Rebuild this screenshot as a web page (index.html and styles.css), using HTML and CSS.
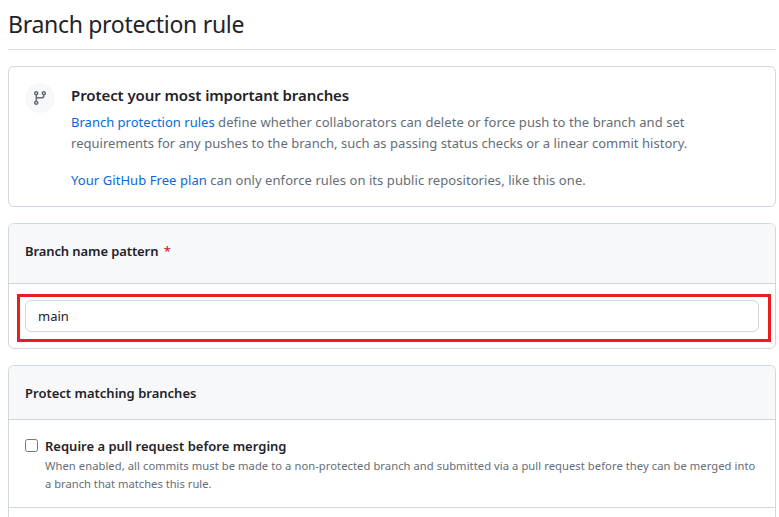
FILE: index.html
```html
<!DOCTYPE html>
<html lang="en">
<head>
<meta charset="utf-8">
<title>Branch protection rule</title>
<link rel="stylesheet" href="styles.css">
</head>
<body>
<main class="settings">
  <h1 class="page-title">Branch protection rule</h1>
  <section class="box intro">
    <div class="icon-circle">
      <svg width="16" height="16" viewBox="0 0 16 16" fill="currentColor" aria-hidden="true"><path d="M9.5 3.25a2.25 2.25 0 1 1 3 2.122V6A2.5 2.5 0 0 1 10 8.5H6a1 1 0 0 0-1 1v1.128a2.251 2.251 0 1 1-1.5 0V5.372a2.25 2.25 0 1 1 1.5 0v1.836A2.493 2.493 0 0 1 6 7h4a1 1 0 0 0 1-1v-.628A2.25 2.25 0 0 1 9.5 3.25Zm-6 0a.75.75 0 1 0 1.5 0 .75.75 0 0 0-1.5 0Zm8.25-.75a.75.75 0 1 0 0 1.5.75.75 0 0 0 0-1.5ZM4.25 12a.75.75 0 1 0 0 1.5.75.75 0 0 0 0-1.5Z"/></svg>
    </div>
    <div class="intro-body">
      <h2 class="intro-title">Protect your most important branches</h2>
      <p class="copy"><a class="rules-link">Branch protection rules</a> define whether collaborators can delete or force push to the branch and set<br><span class="second-line">requirements for any pushes to the branch, such as passing status checks or a linear commit history.</span></p>
      <p class="copy"><a>Your GitHub Free plan</a> can only enforce rules on its public repositories, like this one.</p>
    </div>
  </section>
  <section class="box pattern">
    <div class="box-header pattern-header"><label for="pattern">Branch name pattern <span class="required">*</span></label></div>
    <div class="pattern-row">
      <div class="highlight"><input id="pattern" class="field" type="text" value="main"></div>
    </div>
  </section>
  <section class="box matching">
    <div class="box-header matching-header">Protect matching branches</div>
    <div class="rule">
      <input id="pull" class="check" type="checkbox">
      <div class="rule-body">
        <label for="pull" class="rule-title">Require a pull request before merging</label>
        <p class="note">When enabled, all commits must be made to a non-protected branch and submitted via a pull request before they can be merged into<br><span class="note-end">a branch that matches this rule.</span></p>
      </div>
    </div>
  </section>
</main>
</body>
</html>
```
FILE: styles.css
```css
* { box-sizing: border-box; }
body {
  margin: 0;
  background: #fff;
  color: #1f2328;
  font: 13px/21px "Noto Sans", "Open Sans", sans-serif;
}
h1, h2, p { margin: 0; }
a { color: #0969da; text-decoration: none; }
.settings { padding: 0 3px 0 8px; }
.page-title {
  height: 50px;
  border-bottom: 1px solid #d8dee4;
  font-size: 23px;
  font-weight: 400;
  line-height: 49px;
  letter-spacing: -0.3px;
}
.box {
  border: 1px solid #d0d7de;
  border-radius: 6px;
  overflow: hidden;
  margin-top: 16px;
}
.intro { display: flex; gap: 16px; height: 141px; padding: 16px; }
.icon-circle {
  display: flex;
  flex: none;
  align-items: center;
  justify-content: center;
  width: 30px;
  height: 30px;
  border-radius: 50%;
  background: #f6f8fa;
  color: #656d76;
}
.intro-body { white-space: nowrap; }
.intro-title {
  margin-bottom: 5px;
  font-size: 15px;
  font-weight: 600;
  line-height: 24px;
  letter-spacing: -0.08px;
}
.copy { color: #656d76; letter-spacing: 0.065px; }
.copy + .copy { margin-top: 16px; }
.rules-link { letter-spacing: 0.01px; }
.second-line { letter-spacing: 0.03px; }
.box-header {
  display: flex;
  align-items: center;
  padding: 0 16px;
  background: #f6f8fa;
  border-bottom: 1px solid #d0d7de;
  font-weight: 600;
}
.pattern { height: 126px; }
.pattern-header { height: 60px; padding-bottom: 4px; letter-spacing: -0.1px; }
.required { margin-left: 2px; color: #cf222e; font-weight: 500; }
.pattern-row { padding: 10px 4px 0 8px; }
.highlight { height: 48px; padding: 3px 9px 0 5px; border: 3px solid #ee1c1c; }
.field {
  display: block;
  width: 100%;
  height: 32px;
  padding: 0 12px;
  border: 1px solid #d0d7de;
  border-radius: 6px;
  background: #fff;
  color: inherit;
  font: inherit;
}
.matching { height: 152px; border-bottom: 0; border-bottom-left-radius: 0; border-bottom-right-radius: 0; }
.matching-header { height: 54px; padding-top: 2px; }
.rule { display: flex; gap: 7px; height: 88px; padding: 16px 16px 0; border-bottom: 1px solid #d0d7de; }
.check { flex: none; width: 13px; height: 13px; margin: 3px 0 0; }
.rule-body { white-space: nowrap; }
.rule-title { display: block; font-weight: 600; }
.note { color: #656d76; font-size: 11.2px; line-height: 18px; letter-spacing: 0.065px; }
.note-end { letter-spacing: 0; }
```
